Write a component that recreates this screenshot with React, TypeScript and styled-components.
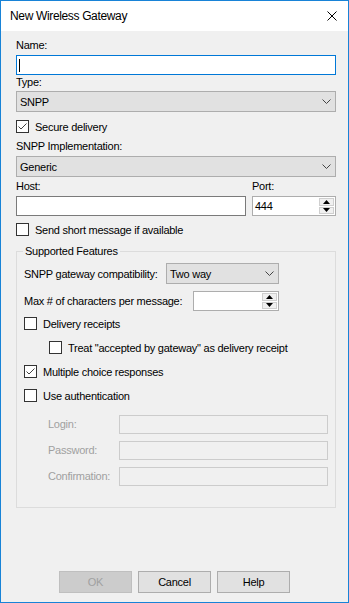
import styled, { createGlobalStyle } from "styled-components";

const GlobalStyle = createGlobalStyle`
  html, body {
    margin: 0;
    padding: 0;
    background: #ffffff;
  }
  * {
    box-sizing: border-box;
  }
`;

const Window = styled.div`
  width: 349px;
  height: 603px;
  border: 1px solid #1883d7;
  display: flex;
  flex-direction: column;
  background: #f0f0f0;
  font-family: "Liberation Sans", Arial, sans-serif;
  font-size: 11px;
  letter-spacing: -0.25px;
  color: #000;
`;

const TitleBar = styled.div`
  height: 30px;
  flex: none;
  background: #ffffff;
  display: flex;
  align-items: center;
  justify-content: space-between;
  padding: 0 11px 0 9px;
`;

const TitleText = styled.span`
  font-size: 12px;
  letter-spacing: -0.35px;
  line-height: 15px;
`;

const CloseGlyph = styled.svg`
  width: 10px;
  height: 10px;
  display: block;
`;

const Body = styled.div`
  flex: 1;
  display: flex;
  flex-direction: column;
  padding: 0 12px 0 15px;
`;

const Label = styled.div<{ $mt?: number; $disabled?: boolean }>`
  height: 15px;
  line-height: 15px;
  margin-top: ${(p) => p.$mt ?? 0}px;
  color: ${(p) => (p.$disabled ? "#a0a0a0" : "#000")};
  white-space: nowrap;
`;

const TextBox = styled.div<{ $mt?: number; $focused?: boolean; $h?: number }>`
  height: ${(p) => p.$h ?? 20}px;
  margin-top: ${(p) => p.$mt ?? 0}px;
  background: #fff;
  border: 1px solid ${(p) => (p.$focused ? "#0078d7" : "#7a7a7a")};
  display: flex;
  align-items: center;
  padding-left: 2px;
`;

const Caret = styled.span`
  width: 1px;
  height: 13px;
  background: #000;
`;

const Combo = styled.div<{ $mt?: number; $width?: number; $h?: number }>`
  height: ${(p) => p.$h ?? 21}px;
  width: ${(p) => (p.$width ? `${p.$width}px` : "auto")};
  margin-top: ${(p) => p.$mt ?? 0}px;
  background: #e1e1e1;
  border: 1px solid #adadad;
  display: flex;
  align-items: center;
  justify-content: space-between;
  padding: 0 4px 0 3px;
  flex: none;
`;

const Chevron = () => (
  <svg width="9" height="5" viewBox="0 0 9 5" style={{ display: "block" }}>
    <polyline points="0.5,0.5 4.5,4.5 8.5,0.5" fill="none" stroke="#444" strokeWidth="1" />
  </svg>
);

const CheckRow = styled.div<{ $mt?: number; $indent?: number }>`
  display: flex;
  align-items: center;
  height: 13px;
  margin-top: ${(p) => p.$mt ?? 0}px;
  margin-left: ${(p) => p.$indent ?? 0}px;
`;

const Box = styled.span`
  width: 13px;
  height: 13px;
  flex: none;
  border: 1px solid #333;
  background: #fff;
  margin-right: 6px;
  display: flex;
  align-items: center;
  justify-content: center;
`;

const CheckBox = ({ checked, label, mt, indent }: { checked?: boolean; label: string; mt?: number; indent?: number }) => (
  <CheckRow $mt={mt} $indent={indent}>
    <Box>
      {checked && (
        <svg width="11" height="11" viewBox="0 0 11 11" style={{ display: "block" }}>
          <polyline points="1.5,5.5 4,8 9.5,2.5" fill="none" stroke="#444" strokeWidth="1" />
        </svg>
      )}
    </Box>
    <span>{label}</span>
  </CheckRow>
);

const HostPortRow = styled.div`
  display: flex;
  gap: 6px;
  margin-top: 2px;
`;

const Column = styled.div<{ $grow?: boolean; $width?: number }>`
  display: flex;
  flex-direction: column;
  flex: ${(p) => (p.$grow ? 1 : "none")};
  width: ${(p) => (p.$width ? `${p.$width}px` : "auto")};
`;

const Spin = styled.div<{ $width?: number; $h?: number; $mt?: number }>`
  height: ${(p) => p.$h ?? 20}px;
  width: ${(p) => (p.$width ? `${p.$width}px` : "auto")};
  margin-top: ${(p) => p.$mt ?? 0}px;
  background: #fff;
  border: 1px solid #adadad;
  display: flex;
  align-items: center;
  justify-content: space-between;
  padding: 1px 1px 1px 2px;
  flex: none;
`;

const SpinButtons = styled.div`
  width: 15px;
  height: 100%;
  display: flex;
  flex-direction: column;
  gap: 1px;
`;

const SpinHalf = styled.div`
  flex: 1;
  background: #f0f0f0;
  border: 1px solid #cfcfcf;
  display: flex;
  align-items: center;
  justify-content: center;
`;

const Arrow = ({ up }: { up?: boolean }) => (
  <svg width="7" height="4" viewBox="0 0 7 4" style={{ display: "block" }}>
    <polygon points={up ? "0,4 7,4 3.5,0" : "0,0 7,0 3.5,4"} fill="#000" />
  </svg>
);

const SpinControl = ({ value, width, h, mt }: { value?: string; width?: number; h?: number; mt?: number }) => (
  <Spin $width={width} $h={h} $mt={mt}>
    <span>{value}</span>
    <SpinButtons>
      <SpinHalf><Arrow up /></SpinHalf>
      <SpinHalf><Arrow /></SpinHalf>
    </SpinButtons>
  </Spin>
);

const Group = styled.div`
  margin-top: 15px;
  border: 1px solid #dcdcdc;
  padding: 0 7px 21px 7px;
  display: flex;
  flex-direction: column;
`;

const GroupTitle = styled.span`
  margin-top: -8px;
  margin-left: -1px;
  align-self: flex-start;
  background: #f0f0f0;
  padding: 0 2px;
  height: 15px;
  line-height: 15px;
`;

const FieldRow = styled.div<{ $mt?: number; $labelWidth: number }>`
  display: grid;
  grid-template-columns: ${(p) => p.$labelWidth}px auto;
  align-items: center;
  justify-content: start;
  margin-top: ${(p) => p.$mt ?? 0}px;
`;

const AuthRow = styled.div<{ $mt?: number }>`
  display: grid;
  grid-template-columns: 71px 1fr;
  align-items: center;
  margin-top: ${(p) => p.$mt ?? 0}px;
  margin-left: 24px;
`;

const DisabledBox = styled.div`
  height: 19px;
  border: 1px solid #cccccc;
  background: #f0f0f0;
`;

const Footer = styled.div`
  margin: auto -12px 0 -15px;
  display: flex;
  justify-content: center;
  gap: 6px;
  padding-bottom: 9px;
`;

const Button = styled.div<{ $disabled?: boolean }>`
  width: 73px;
  height: 22px;
  display: flex;
  align-items: center;
  justify-content: center;
  background: ${(p) => (p.$disabled ? "#cccccc" : "#e1e1e1")};
  border: 1px solid ${(p) => (p.$disabled ? "#bfbfbf" : "#adadad")};
  color: ${(p) => (p.$disabled ? "#a0a0a0" : "#000")};
`;

export default function App() {
  return (
    <>
      <GlobalStyle />
      <Window>
        <TitleBar>
          <TitleText>New Wireless Gateway</TitleText>
          <CloseGlyph viewBox="0 0 10 10">
            <path d="M0.5 0.5 L9.5 9.5 M9.5 0.5 L0.5 9.5" stroke="#000" strokeWidth="1" />
          </CloseGlyph>
        </TitleBar>
        <Body>
          <Label $mt={7}>Name:</Label>
          <TextBox $mt={2} $focused>
            <Caret />
          </TextBox>
          <Label>Type:</Label>
          <Combo $mt={1}>
            <span>SNPP</span>
            <Chevron />
          </Combo>
          <CheckBox checked label="Secure delivery" mt={8} />
          <Label $mt={6}>SNPP Implementation:</Label>
          <Combo $mt={2}>
            <span>Generic</span>
            <Chevron />
          </Combo>
          <HostPortRow>
            <Column $grow>
              <Label>Host:</Label>
              <TextBox $mt={2} />
            </Column>
            <Column $width={84}>
              <Label>Port:</Label>
              <SpinControl value="444" mt={2} />
            </Column>
          </HostPortRow>
          <CheckBox label="Send short message if available" mt={7} />
          <Group>
            <GroupTitle>Supported Features</GroupTitle>
            <FieldRow $mt={4} $labelWidth={142}>
              <span>SNPP gateway compatibility:</span>
              <Combo $width={113}>
                <span>Two way</span>
                <Chevron />
              </Combo>
            </FieldRow>
            <FieldRow $mt={7} $labelWidth={169}>
              <span>Max # of characters per message:</span>
              <SpinControl width={86} />
            </FieldRow>
            <CheckBox label="Delivery receipts" mt={6} />
            <CheckBox label={'Treat "accepted by gateway" as delivery receipt'} mt={11} indent={25} />
            <CheckBox checked label="Multiple choice responses" mt={11} />
            <CheckBox label="Use authentication" mt={11} />
            <AuthRow $mt={13}>
              <Label $disabled>Login:</Label>
              <DisabledBox />
            </AuthRow>
            <AuthRow $mt={7}>
              <Label $disabled>Password:</Label>
              <DisabledBox />
            </AuthRow>
            <AuthRow $mt={7}>
              <Label $disabled>Confirmation:</Label>
              <DisabledBox />
            </AuthRow>
          </Group>
          <Footer>
            <Button $disabled>OK</Button>
            <Button>Cancel</Button>
            <Button>Help</Button>
          </Footer>
        </Body>
      </Window>
    </>
  );
}
